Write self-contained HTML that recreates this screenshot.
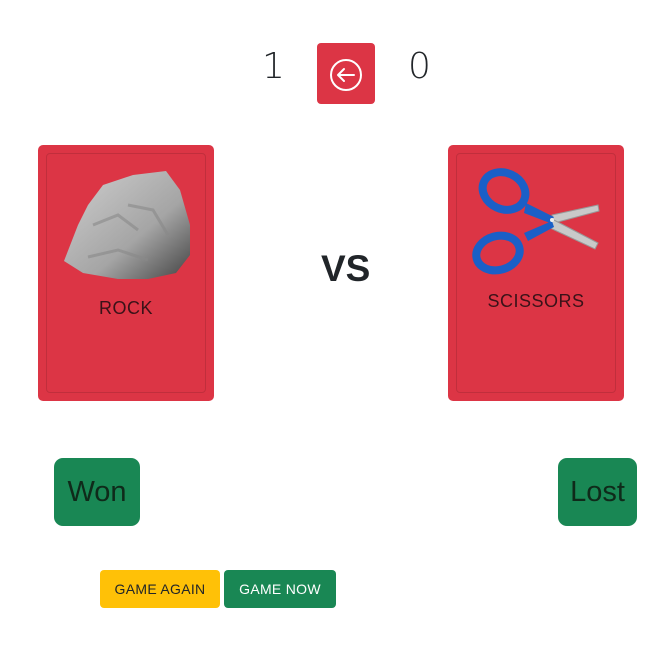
<!DOCTYPE html>
<html><head><meta charset="utf-8"><style>
*{margin:0;padding:0;box-sizing:border-box}
body{width:666px;height:652px;background:#fff;position:relative;font-family:"Liberation Sans",sans-serif;color:#212529;overflow:hidden}
.abs{position:absolute}
.num{font-family:"DejaVu Sans","Liberation Sans",sans-serif;font-size:36px;font-weight:200;top:44px;line-height:46px}
.back{left:317px;top:43px;width:58px;height:61px;background:#dc3545;border-radius:4px}
.card{width:176px;height:256px;top:145px;background:#dc3545;border-radius:5px}
.inner{position:absolute;left:8px;top:8px;right:8px;bottom:8px;border:1px solid rgba(0,0,0,0.12);border-radius:4px}
.lbl{position:absolute;width:100%;text-align:center;font-size:18px;color:#3a1218;letter-spacing:0.5px}
.big{background:#198754;border-radius:9px;font-size:29px;color:#0f2a1a;display:flex;align-items:center;justify-content:center}
.sm{top:570px;height:38px;border-radius:4px;font-size:14px;display:flex;align-items:center;justify-content:center;letter-spacing:0.3px}
</style></head><body>
<div class="abs num" style="left:262px">1</div>
<div class="abs num" style="left:408px">0</div>
<div class="abs back"><svg width="58" height="61" viewBox="0 0 58 61"><circle cx="29" cy="32" r="15" fill="none" stroke="#fff" stroke-width="2"/><path d="M37 32H21M27 26l-6 6 6 6" fill="none" stroke="#fff" stroke-width="2" stroke-linecap="round" stroke-linejoin="round"/></svg></div>

<div class="abs card" style="left:38px"><div class="inner"></div>
<svg class="abs" style="left:20px;top:20px" width="140" height="120" viewBox="0 0 140 120">
<defs><linearGradient id="g" x1="0" y1="0" x2="1" y2="1"><stop offset="0" stop-color="#cfcfcf"/><stop offset="0.6" stop-color="#a5a5a5"/><stop offset="1" stop-color="#444"/></linearGradient></defs>
<path d="M6 96 L20 60 L30 40 L45 20 L75 10 L108 6 L122 25 L132 60 L132 90 L118 108 L90 114 L60 114 L25 108 Z" fill="url(#g)"/>
<path d="M35 60 L60 50 L80 65 M70 40 L95 45 L110 70 M30 92 L60 85 L90 95" stroke="#888" stroke-width="3" fill="none" opacity="0.6"/>
</svg>
<div class="lbl" style="top:153px">ROCK</div></div>

<div class="abs" style="left:321px;top:248px;font-size:37px;font-weight:bold;color:#212529">VS</div>

<div class="abs card" style="left:448px"><div class="inner"></div>
<svg class="abs" style="left:20px;top:20px" width="140" height="120" viewBox="0 0 140 120">
<path d="M84 50 L130 40 L131 46 L86 58 Z" fill="#c9c9c9" stroke="#999" stroke-width="1"/>
<path d="M84 54 L130 78 L127 84 L80 62 Z" fill="#c9c9c9" stroke="#999" stroke-width="1"/>
<path d="M58 38 L86 52 L82 58 L56 48 Z" fill="#1b5fc7"/>
<path d="M56 68 L84 56 L86 62 L60 76 Z" fill="#1b5fc7"/>
<ellipse cx="36" cy="26" rx="22" ry="18" fill="none" stroke="#1b5fc7" stroke-width="8" transform="rotate(25 36 26)"/>
<ellipse cx="30" cy="88" rx="22" ry="17" fill="none" stroke="#1b5fc7" stroke-width="8" transform="rotate(-15 30 88)"/>
<circle cx="84" cy="55" r="2" fill="#eee"/>
</svg>
<div class="lbl" style="top:146px">SCISSORS</div></div>

<div class="abs big" style="left:54px;top:458px;width:86px;height:68px">Won</div>
<div class="abs big" style="left:558px;top:458px;width:79px;height:68px">Lost</div>

<div class="abs sm" style="left:100px;width:120px;background:#ffc107;color:#212529">GAME AGAIN</div>
<div class="abs sm" style="left:224px;width:112px;background:#198754;color:#fff">GAME NOW</div>
</body></html>
